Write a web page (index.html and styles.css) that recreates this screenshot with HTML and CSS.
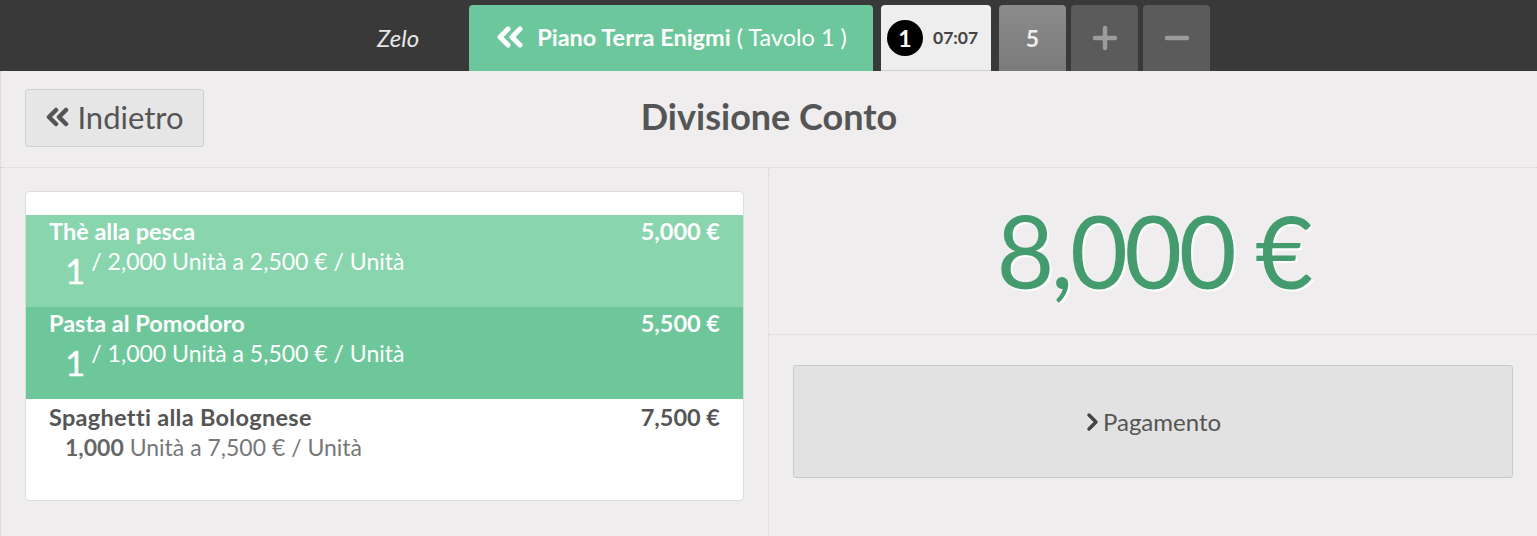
FILE: index.html
```html
<!DOCTYPE html>
<html lang="it">
<head>
<meta charset="utf-8">
<title>Divisione Conto</title>
<link rel="stylesheet" href="styles.css">
</head>
<body>
<div class="topbar">
  <div class="brand">Zelo</div>
  <div class="tab tab-room">
    <svg class="ico-dbl" width="30" height="22" viewBox="0 0 30 22"><path d="M13 3 L5 11 L13 19 M25 3 L17 11 L25 19" fill="none" stroke="#fff" stroke-width="5" stroke-linecap="round" stroke-linejoin="round"/></svg>
    <span class="room-name">Piano Terra Enigmi</span><span class="room-table">( Tavolo 1 )</span>
  </div>
  <div class="tab tab-timer"><span class="badge">1</span><span class="time">07:07</span></div>
  <div class="tab tab-count">5</div>
  <div class="tab tab-btn"><svg width="26" height="26" viewBox="0 0 26 26"><path d="M13 3 V23 M3 13 H23" stroke="#9c9c9c" stroke-width="4.5" stroke-linecap="round"/></svg></div>
  <div class="tab tab-btn"><svg width="26" height="26" viewBox="0 0 26 26"><path d="M3 13 H23" stroke="#9c9c9c" stroke-width="4.5" stroke-linecap="round"/></svg></div>
</div>
<main class="page">
  <header class="head">
    <div class="head-left">
      <button class="back"><svg width="26" height="20" viewBox="0 0 26 20"><path d="M11 3 L4 10 L11 17 M21 3 L14 10 L21 17" fill="none" stroke="#555" stroke-width="4.5" stroke-linecap="round" stroke-linejoin="round"/></svg>Indietro</button>
    </div>
    <h1 class="title">Divisione Conto</h1>
    <div></div>
  </header>
  <div class="cols">
    <section class="col-left">
      <div class="card">
        <div class="row row-light">
          <div class="row-top"><span class="name">Thè alla pesca</span><span class="price">5,000 €</span></div>
          <div class="row-sub"><span class="qty">1</span><span class="frac">/ 2,000 Unità a 2,500 € / Unità</span></div>
        </div>
        <div class="row row-dark">
          <div class="row-top"><span class="name">Pasta al Pomodoro</span><span class="price">5,500 €</span></div>
          <div class="row-sub"><span class="qty">1</span><span class="frac">/ 1,000 Unità a 5,500 € / Unità</span></div>
        </div>
        <div class="row row-plain">
          <div class="row-top"><span class="name">Spaghetti alla Bolognese</span><span class="price">7,500 €</span></div>
          <div class="row-sub plain"><b>1,000</b> Unità a 7,500 € / Unità</div>
        </div>
      </div>
    </section>
    <section class="col-right">
      <div class="total">8,000 €</div>
      <div class="pay-wrap">
        <button class="pay"><svg width="14" height="20" viewBox="0 0 14 20"><path d="M4 3 L11 10 L4 17" fill="none" stroke="#444" stroke-width="3.5" stroke-linecap="round" stroke-linejoin="round"/></svg>Pagamento</button>
      </div>
    </section>
  </div>
</main>
</body>
</html>
```

FILE: styles.css
```css
* { box-sizing: border-box; }
html, body { margin: 0; padding: 0; }
body {
  font-family: Lato, "Open Sans", sans-serif;
  background: #efeded;
  color: #555;
  width: 1537px;
  height: 536px;
  overflow: hidden;
}

.topbar {
  height: 71px;
  background: #393939;
  display: flex;
  align-items: flex-end;
  padding-left: 377px;
}
.brand {
  font-style: italic;
  font-size: 24px;
  color: #e6e6e6;
  align-self: center;
  padding-top: 3px;
  width: 92px;
}
.tab {
  height: 66px;
  border-radius: 4px 4px 0 0;
  display: flex;
  align-items: center;
  justify-content: center;
}
.tab-room {
  width: 404px;
  background: #6dc79c;
  color: #fff;
  font-size: 23.5px;
  padding-bottom: 2px;
}
.ico-dbl { margin-right: 12px; }
.room-name { font-weight: 700; margin-right: 6px; }
.tab-timer {
  width: 110px;
  margin-left: 8px;
  background: #eeeeee;
  border-bottom: 1px solid #d0d0d0;
  justify-content: flex-start;
  padding-left: 6px;
}
.badge {
  width: 36px;
  height: 36px;
  border-radius: 50%;
  background: #000;
  color: #fff;
  font-weight: 700;
  font-size: 23px;
  display: flex;
  align-items: center;
  justify-content: center;
}
.time {
  margin-left: 10px;
  font-weight: 700;
  font-size: 17.5px;
  color: #444;
}
.tab-count {
  width: 67px;
  margin-left: 8px;
  background: linear-gradient(#8b8b8b, #7b7b7b);
  color: #eee;
  font-weight: 700;
  font-size: 23px;
}
.tab-btn {
  width: 67px;
  margin-left: 5px;
  background: #5b5b5b;
}

.page {
  border-left: 1px dotted #ccc;
  height: 465px;
}
.head {
  height: 97px;
  border-bottom: 1px dotted #d4d4d4;
  display: grid;
  grid-template-columns: 1fr auto 1fr;
  align-items: start;
}
.head-left { padding: 18px 0 0 24px; }
.back {
  width: 179px;
  height: 58px;
  background: #e6e6e6;
  border: 1px solid #cfcfcf;
  border-radius: 3px;
  font-family: inherit;
  font-size: 31px;
  color: #555;
  display: flex;
  align-items: center;
  justify-content: center;
  gap: 6px;
  padding: 0 0 2px 0;
}
.title {
  margin: 0;
  padding-top: 24px;
  font-size: 36px;
  font-weight: 700;
  color: #555;
  line-height: 1.2;
}

.cols {
  display: grid;
  grid-template-columns: 768px 1fr;
  height: 368px;
}
.col-left {
  border-right: 1px dotted #d4d4d4;
  padding: 23px 24px 0 24px;
}
.card {
  background: #fff;
  border: 1px solid #dcdcdc;
  border-radius: 4px;
  padding: 23px 0 31px;
}
.row {
  height: 92px;
  padding: 2px 23px 0 23px;
}
.row-light { background: #88d5ae; color: #fff; }
.row-dark { background: #6ec79b; color: #fff; }
.row-plain { height: 70px; color: #555; padding-top: 4px; }
.row-top {
  display: flex;
  justify-content: space-between;
  font-weight: 700;
  font-size: 23.5px;
  line-height: 28px;
}
.row-plain .name { letter-spacing: 0.3px; }
.row-sub {
  display: flex;
  align-items: flex-start;
  padding-left: 16px;
  font-size: 23px;
  margin-top: 2px;
}
.qty {
  font-size: 35px;
  line-height: 40px;
  margin-top: 3px;
  margin-right: 6px;
  -webkit-text-stroke: 0.4px #fff;
}
.frac { line-height: 28px; }
.row-sub.plain {
  display: block;
  color: #777;
  line-height: 32px;
  margin-top: 0;
}
.row-sub.plain b { color: #666; }

.col-right { display: flex; flex-direction: column; }
.total {
  height: 167px;
  border-bottom: 1px dotted #d4d4d4;
  display: flex;
  align-items: center;
  justify-content: center;
  font-size: 100px;
  letter-spacing: -3.6px;
  color: #439b6e;
  text-shadow: 2px 2px 1px #fff;
  padding-bottom: 2px;
}
.pay-wrap { padding: 30px 24px 0 24px; }
.pay {
  width: 100%;
  height: 113px;
  background: #e2e2e2;
  border: 1px solid #c9c9c9;
  border-radius: 3px;
  font-family: inherit;
  font-size: 24px;
  color: #555;
  display: flex;
  align-items: center;
  justify-content: center;
  gap: 4px;
}
```
